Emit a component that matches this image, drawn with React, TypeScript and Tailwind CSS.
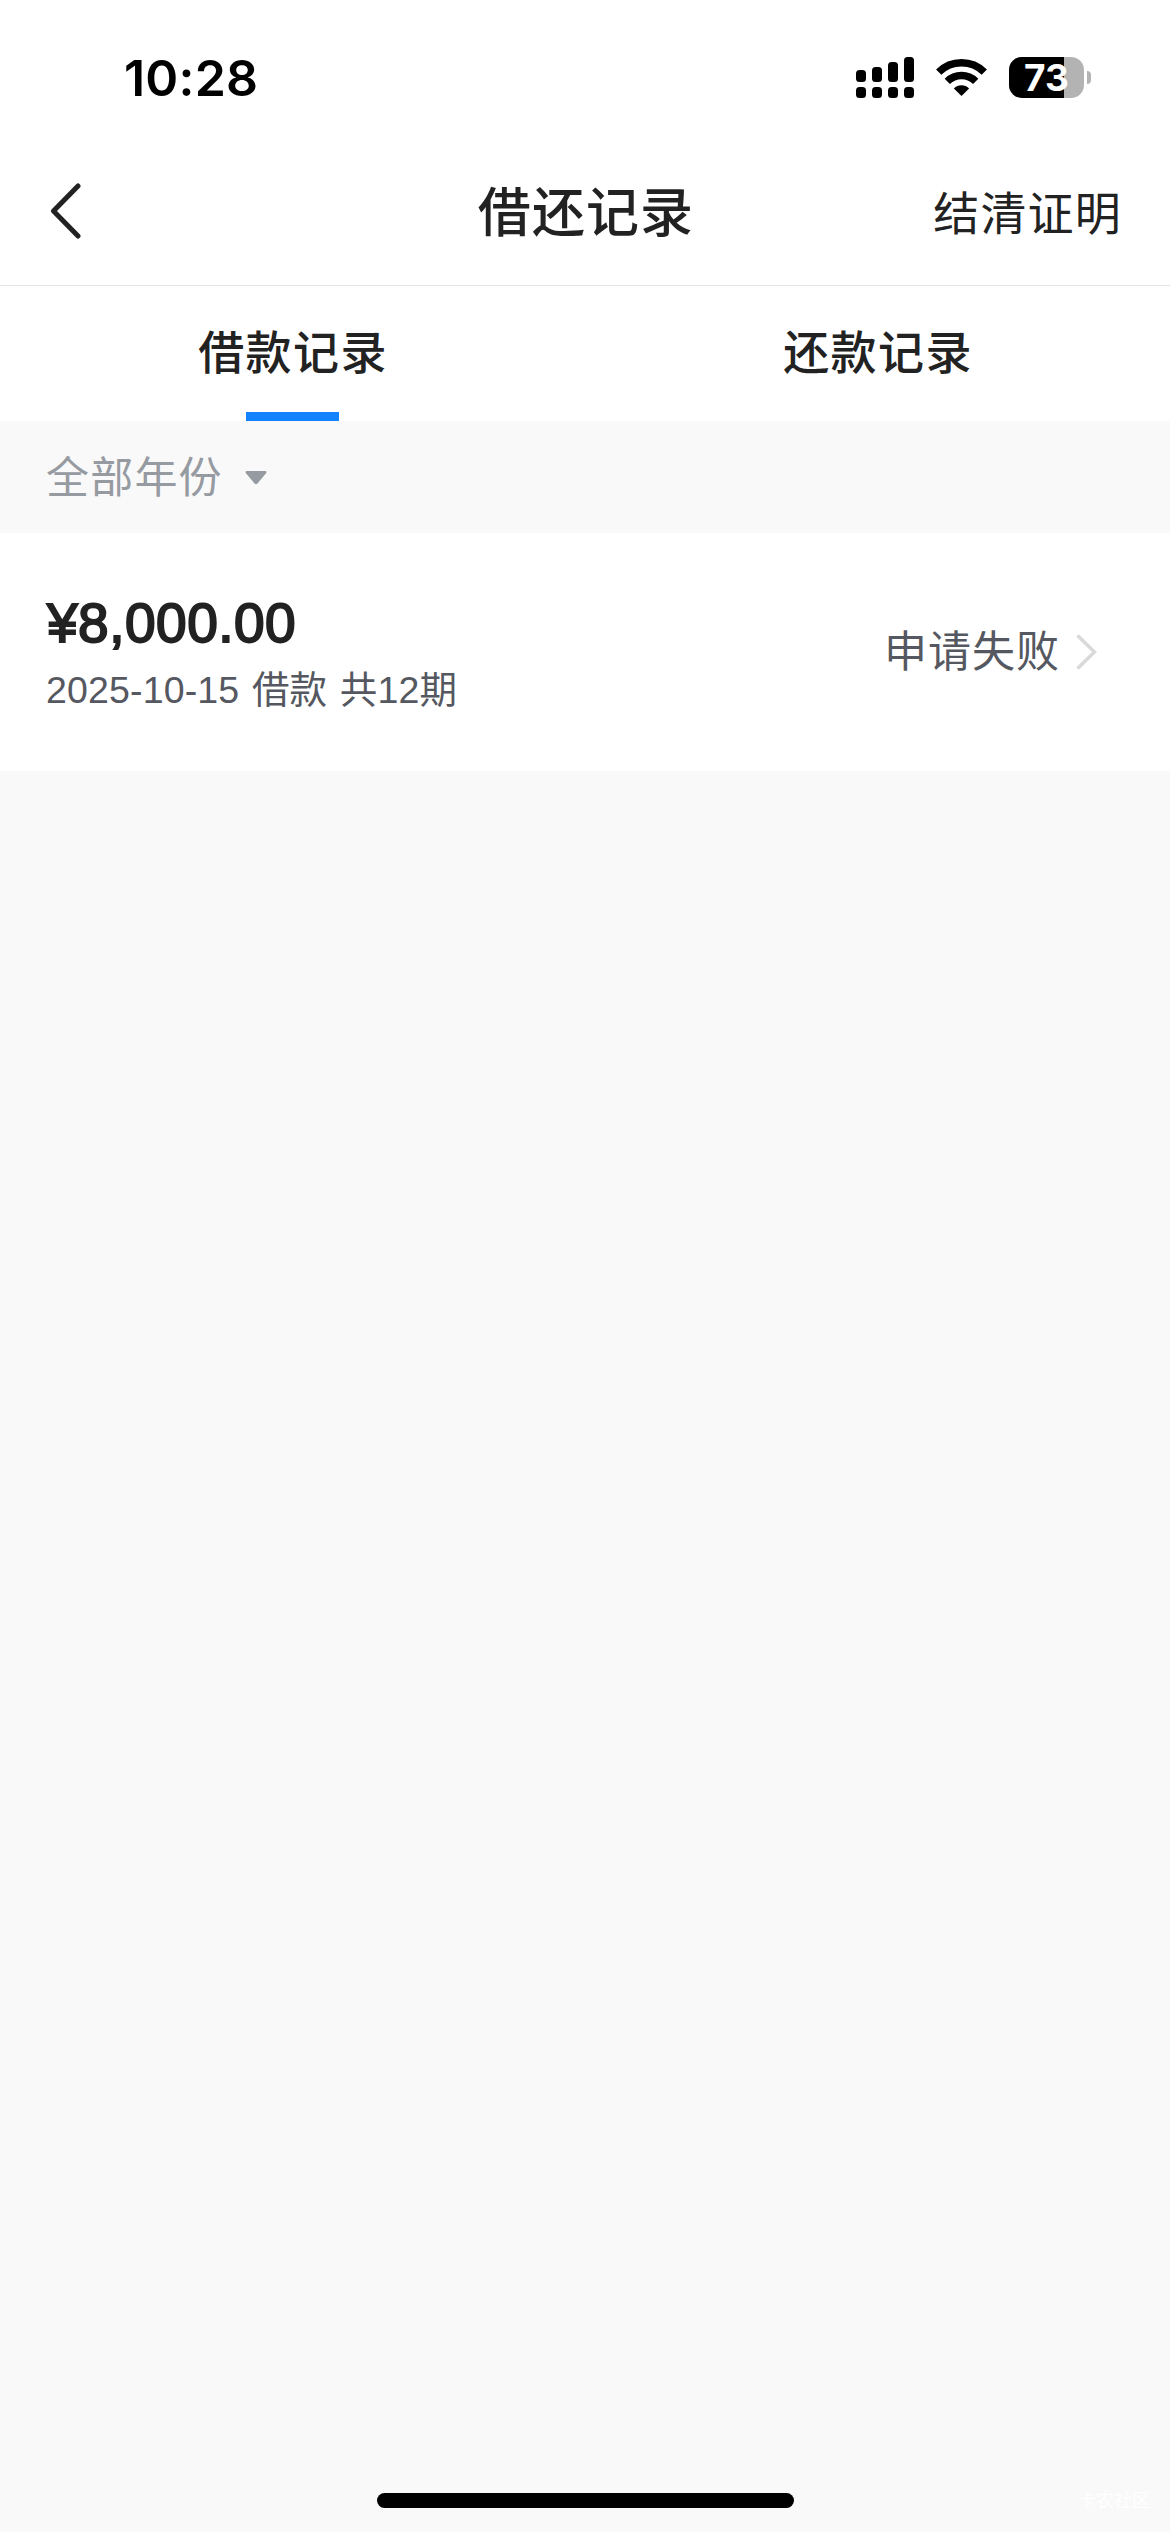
import { useState } from 'react';

interface LoanRecord {
  id: number;
  amount: string;
  detail: string;
  status: string;
}

const TABS = ['借款记录', '还款记录'];

const RECORDS: LoanRecord[] = [
  { id: 1, amount: '¥8,000.00', detail: '2025-10-15 借款 共12期', status: '申请失败' },
];

const BATTERY = 73;

function SignalIcon() {
  return (
    <svg width="58" height="41" viewBox="0 0 58 41" fill="#000">
      <rect x="0" y="13" width="10" height="12" rx="3.5" />
      <rect x="16" y="10" width="10" height="15" rx="3.5" />
      <rect x="32" y="5" width="10" height="20" rx="3.5" />
      <rect x="48" y="0" width="10" height="25" rx="3.5" />
      <rect x="0" y="30" width="10" height="11" rx="3.5" />
      <rect x="16" y="30" width="10" height="11" rx="3.5" />
      <rect x="32" y="30" width="10" height="11" rx="3.5" />
      <rect x="48" y="30" width="10" height="11" rx="3.5" />
    </svg>
  );
}

function WifiIcon() {
  return (
    <svg width="51" height="37" viewBox="0 0 51 37" fill="none" stroke="#000" strokeWidth="7.5">
      <path d="M2.7 13.2a32.4 32.4 0 0 1 45.6 0" />
      <path d="M11.3 22.3a20.2 20.2 0 0 1 28.4 0" />
      <path d="M25.5 37l-7.6-7.5a10.7 10.7 0 0 1 15.2 0z" fill="#000" stroke="none" />
    </svg>
  );
}

function Battery() {
  return (
    <div className="flex items-center gap-[3px]">
      <div className="relative h-[41px] w-[75px] rounded-[13px] bg-[#b3b3b3]">
        <div className="h-full rounded-l-[13px] bg-black" style={{ width: `${BATTERY}%` }} />
        <span className="absolute inset-0 flex items-center justify-center font-[Inter] text-[37px] leading-[41px] font-bold text-white">
          {BATTERY}
        </span>
      </div>
      <div className="h-[13px] w-1 rounded-r-full bg-[#b3b3b3]" />
    </div>
  );
}

function StatusBar() {
  return (
    <div className="flex h-[155px] items-center justify-between pr-[79px] pl-[124px]">
      <span className="font-[Inter] text-[50px] leading-[60px] font-semibold tracking-[0.2px] text-black">10:28</span>
      <div className="flex items-center">
        <SignalIcon />
        <div className="mx-[22px]">
          <WifiIcon />
        </div>
        <Battery />
      </div>
    </div>
  );
}

function RecordRow({ record }: { record: LoanRecord }) {
  return (
    <div className="flex h-[238px] items-center justify-between bg-white pr-[73px] pl-[46px]">
      <div className="flex flex-col pt-[8px]">
        <span className="pl-px text-[55px] leading-[67px] tracking-[0.5px] text-[#222] [-webkit-text-stroke:2px_#222]">{record.amount}</span>
        <span className="text-[37.5px] leading-[66px] tracking-[0.15px] text-[#555860] [word-spacing:2px]">{record.detail}</span>
      </div>
      <div className="flex items-center gap-[16px]">
        <span className="text-[43px] leading-[60px] tracking-[1px] text-[#555860]">{record.status}</span>
        <svg width="21" height="36" viewBox="0 0 21 36" fill="none" stroke="#d9d9d9" strokeWidth="3.5">
          <path d="M1.5 1.5L18.5 18L1.5 34.5" />
        </svg>
      </div>
    </div>
  );
}

export default function App() {
  const [active, setActive] = useState(0);

  return (
    <div className="relative flex h-[2532px] w-[1170px] flex-col bg-[#f9f9f9] font-['Liberation_Sans','Noto_Sans_CJK_SC',sans-serif]">
      <header className="h-[286px] border-b border-[#e5e5e5] bg-white">
        <StatusBar />
        <div className="grid h-[117px] grid-cols-3 items-center pr-[48px] pl-[50px]">
          <button className="pb-[6px]">
            <svg width="32" height="56" viewBox="0 0 32 56" fill="none" stroke="#222" strokeWidth="5" strokeLinecap="round" strokeLinejoin="round">
              <path d="M28 3L3.5 28L28 53" />
            </svg>
          </button>
          <h1 className="text-center text-[53px] leading-[70px] font-medium tracking-[1.1px] whitespace-nowrap text-[#222]">借还记录</h1>
          <button className="text-right text-[46px] leading-[60px] tracking-[1.2px] text-[#222]">结清证明</button>
        </div>
      </header>

      <nav className="flex h-[135px] bg-white">
        {TABS.map((tab, i) => (
          <button key={tab} onClick={() => setActive(i)} className="flex flex-1 flex-col items-center justify-between pt-[33px]">
            <span className="pl-px text-[46px] leading-[68px] font-medium tracking-[1.4px] text-[#222]">{tab}</span>
            <span className={`h-[9px] w-[93px] ${i === active ? 'bg-[#1283ff]' : 'bg-transparent'}`} />
          </button>
        ))}
      </nav>

      <div className="flex h-[112px] items-center gap-[22px] pt-[2px] pl-[46px]">
        <span className="text-[43px] leading-[60px] tracking-[1.2px] text-[#969aa1]">全部年份</span>
        <svg width="22" height="14" viewBox="0 0 22 14" fill="#969aa1">
          <path d="M2 0h18q2.5 0 1 2.200L12.5 12.5q-1.5 1.5-3 0L1 2.200Q-.5 0 2 0z" />
        </svg>
      </div>

      {RECORDS.map((record) => (
        <RecordRow key={record.id} record={record} />
      ))}

      <div className="mt-auto flex h-[39px] justify-center">
        <div className="h-[15px] w-[417px] rounded-full bg-black" />
      </div>
      <span className="absolute right-[20px] bottom-[19px] text-[18px] leading-[24px] text-white">卡农社区</span>
    </div>
  );
}
